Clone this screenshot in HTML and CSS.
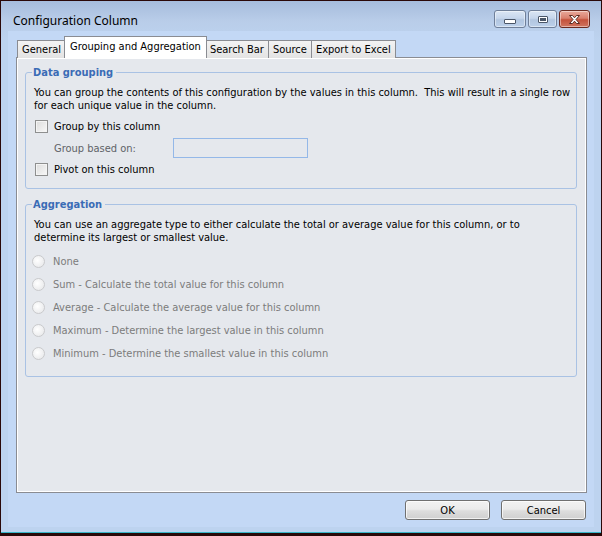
FILE: index.html
```html
<!DOCTYPE html>
<html lang="en">
<head>
  <meta charset="UTF-8">
  <title>Configuration Column</title>
  <link rel="stylesheet" href="styles.css">
</head>
<body>
  <div class="window">
    <div class="titlebar">
      <span class="title">Configuration Column</span>
      <div class="caption-buttons">
        <button class="cap-btn" title="Minimize"><span class="glyph-min"></span></button>
        <button class="cap-btn" title="Maximize"><span class="glyph-max"></span></button>
        <button class="cap-btn close" title="Close">
          <svg width="17" height="11" viewBox="0 0 17 11">
            <path d="M3.5 1.5 L6.5 1.5 L8.5 3.8 L10.5 1.5 L13.5 1.5 L10 5.5 L13.5 9.5 L10.5 9.5 L8.5 7.2 L6.5 9.5 L3.5 9.5 L7 5.5 Z" fill="#fff" stroke="#5a2b22" stroke-width="1" stroke-linejoin="round"/>
          </svg>
        </button>
      </div>
    </div>

    <div class="client">
      <div class="tabs">
        <div class="tab">General</div>
        <div class="tab active">Grouping and Aggregation</div>
        <div class="tab">Search Bar</div>
        <div class="tab">Source</div>
        <div class="tab">Export to Excel</div>
      </div>

      <div class="tab-page">
        <fieldset class="group">
          <legend>Data grouping</legend>
          <p class="desc wide">You can group the contents of this configuration by the values in this column.&nbsp; This will result in a single row for each unique value in the column.</p>
          <label class="check-row first">
            <span class="checkbox"></span>
            Group by this column
          </label>
          <div class="field-row">
            <span class="field-label">Group based on:</span>
            <span class="textbox"></span>
          </div>
          <label class="check-row">
            <span class="checkbox"></span>
            Pivot on this column
          </label>
        </fieldset>

        <fieldset class="group agg">
          <legend>Aggregation</legend>
          <p class="desc">You can use an aggregate type to either calculate the total or average value for this column, or to determine its largest or smallest value.</p>
          <div class="radio-list">
            <label class="radio-row"><span class="radio"></span>None</label>
            <label class="radio-row"><span class="radio"></span>Sum - Calculate the total value for this column</label>
            <label class="radio-row"><span class="radio"></span>Average - Calculate the average value for this column</label>
            <label class="radio-row"><span class="radio"></span>Maximum - Determine the largest value in this column</label>
            <label class="radio-row"><span class="radio"></span>Minimum - Determine the smallest value in this column</label>
          </div>
        </fieldset>
      </div>

      <div class="button-row">
        <button class="push-btn">OK</button>
        <button class="push-btn">Cancel</button>
      </div>
    </div>
  </div>
</body>
</html>
```

FILE: styles.css
```css
body {
  margin: 0;
  padding: 0;
  background-color: #1c0404;
  font-family: 'DejaVu Sans Condensed', 'DejaVu Sans', sans-serif;
  font-stretch: condensed;
  font-size: 11px;
  color: #000;
}

.window {
  width: 602px;
  height: 536px;
  box-sizing: border-box;
  border: 1px solid #2a0808;
  border-bottom-width: 3px;
  background: linear-gradient(to bottom, #a6bcdc 0px, #b9cde9 20px, #bdd3ef 40px);
  padding: 0 7px 6px 7px;
  display: flex;
  flex-direction: column;
  box-shadow: inset 0 -1px 0 #38b6c8;
}

.titlebar {
  height: 30px;
  display: flex;
  align-items: flex-start;
  justify-content: space-between;
}

.title {
  font-family: 'Noto Sans', sans-serif;
  font-stretch: normal;
  font-size: 12px;
  color: #000;
  margin: 11px 0 0 5px;
}

.caption-buttons {
  display: flex;
  gap: 2px;
  margin-top: 9px;
  margin-right: 4px;
}

.cap-btn {
  width: 32px;
  height: 18px;
  padding: 0;
  border: 1px solid #6f7f99;
  border-radius: 3px;
  background: linear-gradient(to bottom, #dbe6f4 0%, #c6d6ec 45%, #b2c6e0 55%, #bcd0ea 100%);
  box-shadow: inset 0 0 0 1px rgba(255, 255, 255, 0.45);
  display: flex;
  align-items: center;
  justify-content: center;
}

.cap-btn:nth-child(2) {
  width: 29px;
}

.cap-btn.close {
  width: 31px;
  border-color: #6a2a20;
  background: linear-gradient(to bottom, #e9a99b 0%, #d9806e 45%, #c4523c 55%, #d07560 100%);
}

.glyph-min {
  width: 10px;
  height: 3px;
  margin-top: 5px;
  background: #fff;
  border: 1px solid #4a5668;
  border-radius: 1px;
}

.glyph-max {
  width: 8px;
  height: 5px;
  border: 1px solid #4a5668;
  background: #fff;
  box-shadow: inset 0 0 0 1px #fff, inset 0 0 0 3px #4a5668;
  border-radius: 1px;
}

.client {
  flex: 1;
  background-color: #c3d8f5;
  padding: 6px 7px 0 8px;
  display: flex;
  flex-direction: column;
}

.tabs {
  display: flex;
  align-items: flex-end;
  height: 21px;
  padding-left: 1px;
  position: relative;
  z-index: 1;
  margin-bottom: -1px;
}

.tab {
  height: 17px;
  line-height: 17px;
  padding: 0 4px;
  border: 1px solid #8a8c92;
  border-bottom: none;
  background: linear-gradient(to bottom, #f3f3f3, #e3e3e3);
  margin-right: -1px;
  white-space: nowrap;
}

.tab.active {
  height: 21px;
  line-height: 19px;
  background: #fff;
  padding: 0 5px 0 5px;
  margin: 0 -2px 0 -1px;
  position: relative;
  z-index: 2;
}

.tab-page {
  flex: 1;
  background-color: #e5e8ed;
  border: 1px solid #8a8c92;
  box-shadow: inset 1px 1px 0 #fff, inset -1px -1px 0 #fff;
  padding: 8px 9px 0 8px;
}

.group {
  margin: 0;
  border: 1px solid #a9c2e4;
  border-radius: 3px;
  padding: 7px 8px 11px 8px;
}

.group legend {
  color: #3a6cb6;
  font-weight: bold;
  padding: 0 3px 0 1px;
  margin-left: -2px;
  line-height: 13px;
}

.desc {
  margin: 0;
  line-height: 13px;
}

.desc.wide {
  margin-right: -14px;
}

.check-row {
  display: flex;
  align-items: center;
  height: 16px;
  margin-top: 3px;
  gap: 6px;
  padding-left: 1px;
}

.check-row.first {
  margin-top: 6px;
}

.checkbox {
  width: 11px;
  height: 11px;
  border: 1px solid #8e8f8f;
  background: linear-gradient(135deg, #dcdcdc, #f8f8f8);
  box-shadow: inset 0 0 0 1px #f4f4f4;
}

.field-row {
  display: flex;
  align-items: center;
  height: 20px;
  margin-top: 4px;
  padding-left: 20px;
}

.field-label {
  color: #5f6368;
  width: 119px;
}

.textbox {
  width: 133px;
  height: 18px;
  border: 1px solid #94b8e8;
}

.group.agg {
  margin-top: 9px;
  padding-bottom: 15px;
}

.radio-list {
  display: flex;
  flex-direction: column;
  gap: 7px;
  margin-top: 9px;
  margin-left: -2px;
}

.radio-row {
  display: flex;
  align-items: center;
  height: 16px;
  gap: 8px;
  color: #7c7c7c;
}

.radio {
  width: 11px;
  height: 11px;
  border: 1px solid #c9cacc;
  border-radius: 50%;
  background: radial-gradient(circle at 40% 40%, #ffffff, #e4e5e7);
}

.button-row {
  height: 34px;
  display: flex;
  justify-content: flex-end;
  align-items: flex-start;
  gap: 11px;
  padding-top: 7px;
  box-sizing: border-box;
  padding-right: 1px;
}

.push-btn {
  width: 85px;
  height: 20px;
  padding: 0;
  font-family: inherit;
  font-stretch: condensed;
  font-size: 11px;
  color: #000;
  border: 1px solid #707070;
  border-radius: 3px;
  background: linear-gradient(to bottom, #f2f2f2 0%, #ebebeb 45%, #dddddd 55%, #cfcfcf 100%);
  box-shadow: inset 0 0 0 1px rgba(255, 255, 255, 0.7);
}
```
